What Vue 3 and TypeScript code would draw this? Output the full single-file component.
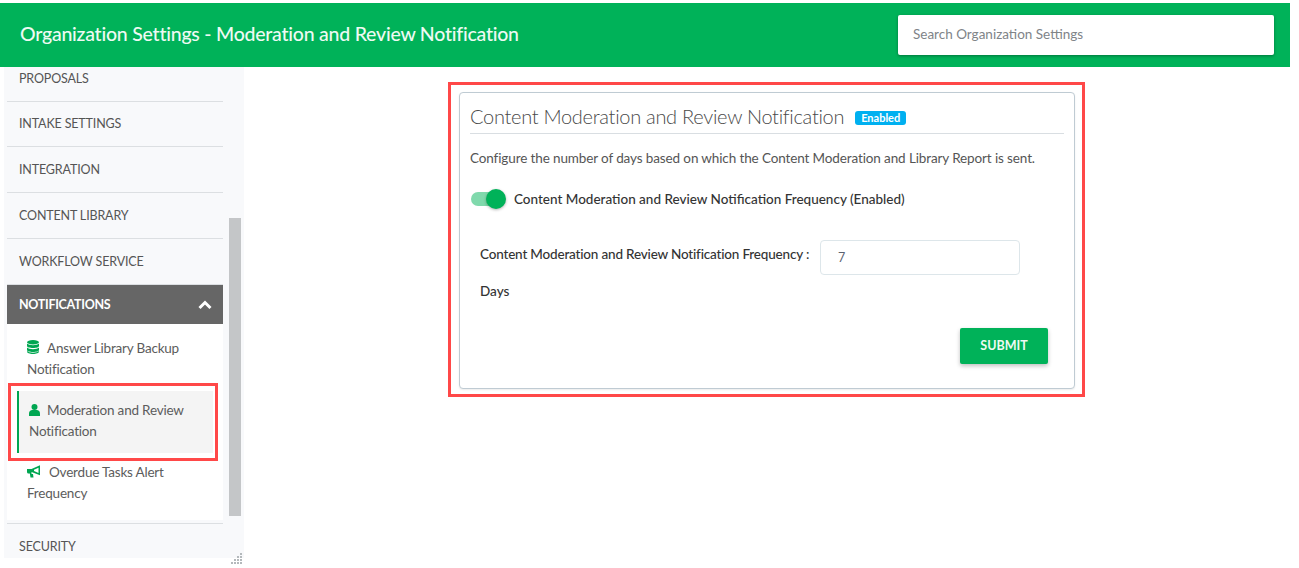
<script setup lang="ts">
const topItems: string[] = ['INTAKE SETTINGS', 'INTEGRATION', 'CONTENT LIBRARY', 'WORKFLOW SERVICE']
</script>

<template>
  <div class="page">
    <header class="header">
      <h1 class="title">Organization Settings - Moderation and Review Notification</h1>
      <div class="search">Search Organization Settings</div>
    </header>
    <div class="body">
      <aside class="sidebar">
        <div class="menu">
          <div class="row first">PROPOSALS</div>
          <div v-for="t in topItems" :key="t" class="row">{{ t }}</div>
          <div class="group-head">
            <span>NOTIFICATIONS</span>
            <svg class="chev" width="14" height="10" viewBox="0 0 14 10"><path d="M1.500 8 7 2.500 12.500 8" fill="none" stroke="#fff" stroke-width="3"/></svg>
          </div>
          <div class="sub">
            <div class="sub-item">
              <svg class="ico" width="12" height="14" viewBox="0 0 12 14"><ellipse cx="6" cy="2.200" rx="6" ry="2.200" fill="#00a651"/><path d="M0 3.600V6c0 1.200 2.700 2 6 2s6-.8 6-2V3.600C10.800 4.600 8.500 5.200 6 5.200S1.200 4.600 0 3.600zM0 7.600V10c0 1.200 2.700 2 6 2s6-.8 6-2V7.600C10.800 8.600 8.500 9.200 6 9.200S1.200 8.600 0 7.600zM0 11v.8C0 13 2.700 14 6 14s6-1 6-2.200V11c-1.200 1-3.500 1.700-6 1.700S1.200 12 0 11z" fill="#00a651"/></svg>
              <span class="gap1">Answer Library Backup</span><br />Notification
            </div>
            <div class="outline">
              <div class="sub-item active">
                <svg class="ico" width="11" height="12" viewBox="0 0 11 12"><circle cx="5.500" cy="3" r="3" fill="#00a651"/><path d="M0 12V9.500C0 7.500 1.500 6 3.200 6h4.600C9.500 6 11 7.500 11 9.500V12z" fill="#00a651"/></svg>
                <span class="gap2">Moderation and Review</span><br />Notification
              </div>
            </div>
            <div class="sub-item last">
              <svg class="ico" width="14" height="13" viewBox="0 0 14 13"><path d="M0 4h4.500L13 0.300v10L4.500 7V9H6L6.500 12.500H3.500L2.800 8.500H1.500C.6 8.500 0 7.800 0 7z" fill="#00a651"/><path d="M11.500 2.800 7 4.800v1.300l4.500 2z" fill="#fff"/></svg>
              <span class="gap3">Overdue Tasks Alert</span><br />Frequency
            </div>
          </div>
          <div class="row security">SECURITY</div>
        </div>
        <div class="scrollbar"></div>
        <svg class="grip" width="12" height="12" viewBox="0 0 12 12"><path d="M9 0h2v2H9zM6 3h2v2H6zM9 3h2v2H9zM3 6h2v2H3zM6 6h2v2H6zM9 6h2v2H9zM0 9h2v2H0zM3 9h2v2H3zM6 9h2v2H6zM9 9h2v2H9z" fill="#b4b9bc"/></svg>
      </aside>
      <main class="main">
        <div class="red-box">
          <section class="card">
            <div class="card-head">
              <h2 class="card-title">Content Moderation and Review Notification</h2>
              <span class="badge">Enabled</span>
            </div>
            <p class="desc">Configure the number of days based on which the Content Moderation and Library Report is sent.</p>
            <div class="toggle-row">
              <span class="toggle"><span class="thumb"></span></span>
              <span class="toggle-label">Content Moderation and Review Notification Frequency (Enabled)</span>
            </div>
            <div class="freq">
              <span class="freq-label">Content Moderation and Review Notification Frequency :</span>
              <div class="input">7</div>
            </div>
            <div class="days">Days</div>
            <div class="actions"><button class="submit">SUBMIT</button></div>
          </section>
        </div>
      </main>
    </div>
  </div>
</template>

<style>
html, body { margin: 0; background: #fff; }
</style>

<style scoped>
.page {
  width: 1299px;
  height: 568px;
  padding-top: 3px;
  box-sizing: border-box;
  overflow: hidden;
  font-family: Lato, "Liberation Sans", sans-serif;
  color: #555;
}
.header {
  width: 1290px;
  height: 64px;
  background: #00b259;
  display: flex;
  align-items: center;
  justify-content: space-between;
  padding: 0 16px 0 20px;
  box-sizing: border-box;
}
.title {
  margin: 0 0 3px;
  font-size: 19.500px;
  font-weight: 500;
  color: #eefaf3;
  letter-spacing: -0.230px;
}
.search {
  width: 376px;
  height: 40px;
  background: #fff;
  border-radius: 2px;
  box-shadow: 0 1px 3px rgba(0, 0, 0, 0.35);
  padding-left: 15px;
  box-sizing: border-box;
  line-height: 38px;
  font-size: 13.500px;
  color: #808488;
}
.body { display: flex; width: 1290px; }
.sidebar {
  position: relative;
  margin-left: 4px;
  width: 240px;
  height: 491px;
  background: #f8f9fb;
  flex: none;
}
.menu { width: 216px; margin-left: 3px; }
.row {
  height: 46px;
  box-sizing: border-box;
  border-bottom: 1px solid #dcdfe2;
  padding: 0 0 0 12px;
  display: flex;
  align-items: center;
  font-size: 12.500px;
  color: #555;
  letter-spacing: -0.150px;
}
.row.first { height: 35px; padding-bottom: 12px; }
.row:nth-child(2) { height: 45px; padding-bottom: 2px; }
.group-head {
  height: 40px;
  margin-top: -1px;
  border-top: 1px solid #dcdfe2;
  background: #666;
  color: #fff;
  display: flex;
  align-items: center;
  justify-content: space-between;
  padding: 0 12px;
  box-sizing: border-box;
  font-size: 12.500px;
  font-weight: 700;
  letter-spacing: -0.300px;
}
.chev { margin-right: -1px; }
.sub {
  background: #fff;
  height: 196px;
  padding-top: 14px;
  box-sizing: border-box;
}
.sub-item {
  font-size: 13.500px;
  line-height: 21px;
  letter-spacing: -0.200px;
  color: #5c5c5c;
  padding-left: 20px;
}
.ico { vertical-align: -1px; }
.gap1 { margin-left: 8px; }
.gap2 { margin-left: 7px; }
.gap3 { margin-left: 8px; }
.outline {
  margin: 3px 5px 0 1px;
  border: 3px solid #ff4848;
  padding: 5px 2px 5px 6px;
  height: 78px;
  box-sizing: border-box;
}
.sub-item.active {
  background: #f4f4f4;
  border-left: 2px solid #00a651;
  height: 62px;
  box-sizing: border-box;
  padding: 9px 0 0 10px;
}
.sub-item.last { padding-top: 1px; }
.row.security {
  height: 35px;
  border-top: 1px solid #dcdfe2;
  border-bottom: none;
  margin-top: 3px;
  padding: 11px 0 0 12px;
}
.scrollbar {
  position: absolute;
  left: 225px;
  top: 151px;
  width: 12px;
  height: 298px;
  background: #c4c6c8;
}
.grip { position: absolute; right: 1px; bottom: -7px; }
.main {
  flex: 1;
  display: flex;
  justify-content: center;
  align-items: flex-start;
  padding: 15px 1px 0 0;
}
.red-box {
  border: 3px solid #ff4848;
  padding: 7px 7px 5px 8px;
  width: 637px;
  box-sizing: border-box;
}
.card {
  height: 297px;
  box-sizing: border-box;
  border: 1px solid #bfcbd3;
  border-radius: 4px;
  box-shadow: 0 1px 2px rgba(0, 0, 0, 0.08);
  padding: 0 10px;
  background: #fff;
}
.card-head {
  height: 41px;
  border-bottom: 1px solid #d9dee2;
  display: flex;
  align-items: center;
  gap: 11px;
  padding-top: 6px;
  box-sizing: border-box;
}
.card-title {
  margin: 0;
  font-size: 20px;
  font-weight: 300;
  color: #4a4a4a;
  letter-spacing: -0.290px;
}
.badge {
  background: #00b0f0;
  color: #fff;
  font-size: 11px;
  font-weight: 700;
  border-radius: 3px;
  width: 51px;
  text-align: center;
  height: 14px;
  line-height: 14px;
  margin-top: 4px;
}
.desc {
  margin: 14px 0 0;
  font-size: 13.500px;
  line-height: 20px;
  letter-spacing: -0.120px;
  color: #555;
  white-space: nowrap;
}
.toggle-row {
  display: flex;
  align-items: center;
  margin-top: 21px;
  height: 20px;
}
.toggle {
  position: relative;
  width: 34px;
  height: 14px;
  margin-left: 1px;
  background: #80d9ac;
  border-radius: 7px;
}
.thumb {
  position: absolute;
  left: 15px;
  top: -3px;
  width: 20px;
  height: 20px;
  border-radius: 50%;
  background: #00b259;
  box-shadow: 0 1px 3px rgba(0, 0, 0, 0.3);
}
.toggle-label {
  margin-left: 9px;
  font-size: 13.500px;
  font-weight: 500;
  color: #333;
}
.freq {
  display: flex;
  align-items: center;
  margin: 31px 0 0 10px;
  height: 35px;
}
.freq-label {
  width: 340px;
  flex: none;
  font-size: 13.500px;
  font-weight: 500;
  letter-spacing: -0.180px;
  color: #333;
  padding-bottom: 8px;
  white-space: nowrap;
}
.input {
  width: 200px;
  height: 35px;
  box-sizing: border-box;
  border: 1px solid #dde6ea;
  border-radius: 4px;
  padding-left: 17px;
  line-height: 33px;
  font-size: 12.500px;
  color: #5c6270;
}
.days {
  margin: 6px 0 0 10px;
  height: 20px;
  line-height: 20px;
  font-size: 13.500px;
  font-weight: 500;
  color: #333;
}
.actions {
  display: flex;
  justify-content: flex-end;
  padding-right: 16px;
  margin-top: 27px;
}
.submit {
  width: 88px;
  height: 36px;
  border: none;
  border-radius: 2px;
  background: #00b259;
  color: #eefaf3;
  font-family: inherit;
  font-size: 12.500px;
  font-weight: 700;
  padding: 0 0 2px;
  box-shadow: 0 2px 4px rgba(0, 0, 0, 0.25);
}
</style>
